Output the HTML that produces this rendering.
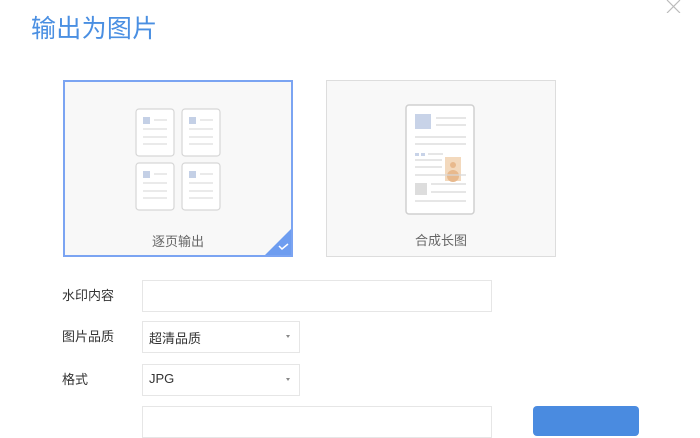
<!DOCTYPE html>
<html><head><meta charset="utf-8"><style>
body{margin:0;width:700px;height:411px;overflow:hidden;background:#fff;font-family:"Liberation Sans","Noto Sans CJK SC",sans-serif;position:relative}
.a{position:absolute}
.title{left:31px;top:9px;font-size:25px;color:#4a8fe2;letter-spacing:0.3px}
.card{box-sizing:border-box;width:230px;height:177px;top:80px;background:#f8f8f8;border:1px solid #ddd}
.sel{border:2px solid #7ba4f2}
.cap{font-size:13px;color:#666;width:100%;text-align:center;top:149px}
.lbl{font-size:13px;color:#333;left:62px}
.inp{box-sizing:border-box;border:1px solid #e6e6e6;background:#fff}
.val{font-size:13px;color:#333;left:6px;top:6px}
.arr{right:9px;top:13px;width:0;height:0;border-left:2px solid transparent;border-right:2px solid transparent;border-top:3px solid #888}
</style></head><body>
<div class="a title">输出为图片</div>
<svg class="a" style="left:666px;top:0" width="15" height="13"><path d="M1 0L14 13M14 0L1 13" stroke="#bbb" stroke-width="1.2"/></svg>

<div class="a card sel" style="left:63px">
<svg class="a" style="left:0;top:0" width="226" height="173">
<g fill="#fff" stroke="#d6d6d6" stroke-width="1.2">
<rect x="71" y="27" width="38" height="47" rx="3"/><rect x="117" y="27" width="38" height="47" rx="3"/>
<rect x="71" y="81" width="38" height="47" rx="3"/><rect x="117" y="81" width="38" height="47" rx="3"/></g>
<g fill="#c4d0e6"><rect x="78" y="35" width="7" height="7"/><rect x="124" y="35" width="7" height="7"/><rect x="78" y="89" width="7" height="7"/><rect x="124" y="89" width="7" height="7"/></g>
<g stroke="#ddd" stroke-width="1.2">
<path d="M89 38h13M78 47h24M78 55h24M78 62h24M135 38h13M124 47h24M124 55h24M124 62h24M89 92h13M78 101h24M78 109h24M78 116h24M135 92h13M124 101h24M124 109h24M124 116h24"/></g>
<path d="M228 145V175H198Z" fill="#6e9df0"/>
<path d="M214 164l3 3 6-5" stroke="#fff" stroke-width="1.5" fill="none"/>
</svg>
<div class="a cap">逐页输出</div></div>

<div class="a card" style="left:326px">
<svg class="a" style="left:0;top:0" width="228" height="175">
<rect x="79" y="24" width="68" height="109" rx="3" fill="#fff" stroke="#d0d0d0" stroke-width="1.5"/>
<rect x="88" y="33" width="16" height="15" fill="#c8d3e8"/>
<rect x="118" y="76" width="16" height="24" fill="#f3d9bd"/>
<circle cx="126" cy="84" r="3" fill="#e8b98d"/><ellipse cx="126" cy="95" rx="6" ry="6" fill="#e8b98d"/>
<rect x="88" y="72" width="4" height="3" fill="#c8d3e8"/><rect x="94" y="72" width="4" height="3" fill="#c8d3e8"/>
<rect x="88" y="102" width="12" height="12" fill="#ddd"/>
<g stroke="#d8d8d8" stroke-width="1.2"><path d="M109 37h30M109 44h30M88 56h51M88 63h51M101 73h15M88 79h27M88 86h27M88 94h51M104 103h35M104 111h35M88 120h51"/></g>
</svg>
<div class="a cap">合成长图</div></div>

<div class="a lbl" style="top:285px">水印内容</div>
<div class="a inp" style="left:142px;top:280px;width:350px;height:32px"></div>
<div class="a lbl" style="top:326px">图片品质</div>
<div class="a inp" style="left:142px;top:321px;width:158px;height:32px"><div class="a val">超清品质</div><div class="a arr"></div></div>
<div class="a lbl" style="top:369px">格式</div>
<div class="a inp" style="left:142px;top:364px;width:158px;height:32px"><div class="a val">JPG</div><div class="a arr"></div></div>
<div class="a inp" style="left:142px;top:406px;width:350px;height:32px"></div>
<div class="a" style="left:533px;top:406px;width:106px;height:30px;background:#4a8be0;border-radius:4px"></div>
</body></html>
